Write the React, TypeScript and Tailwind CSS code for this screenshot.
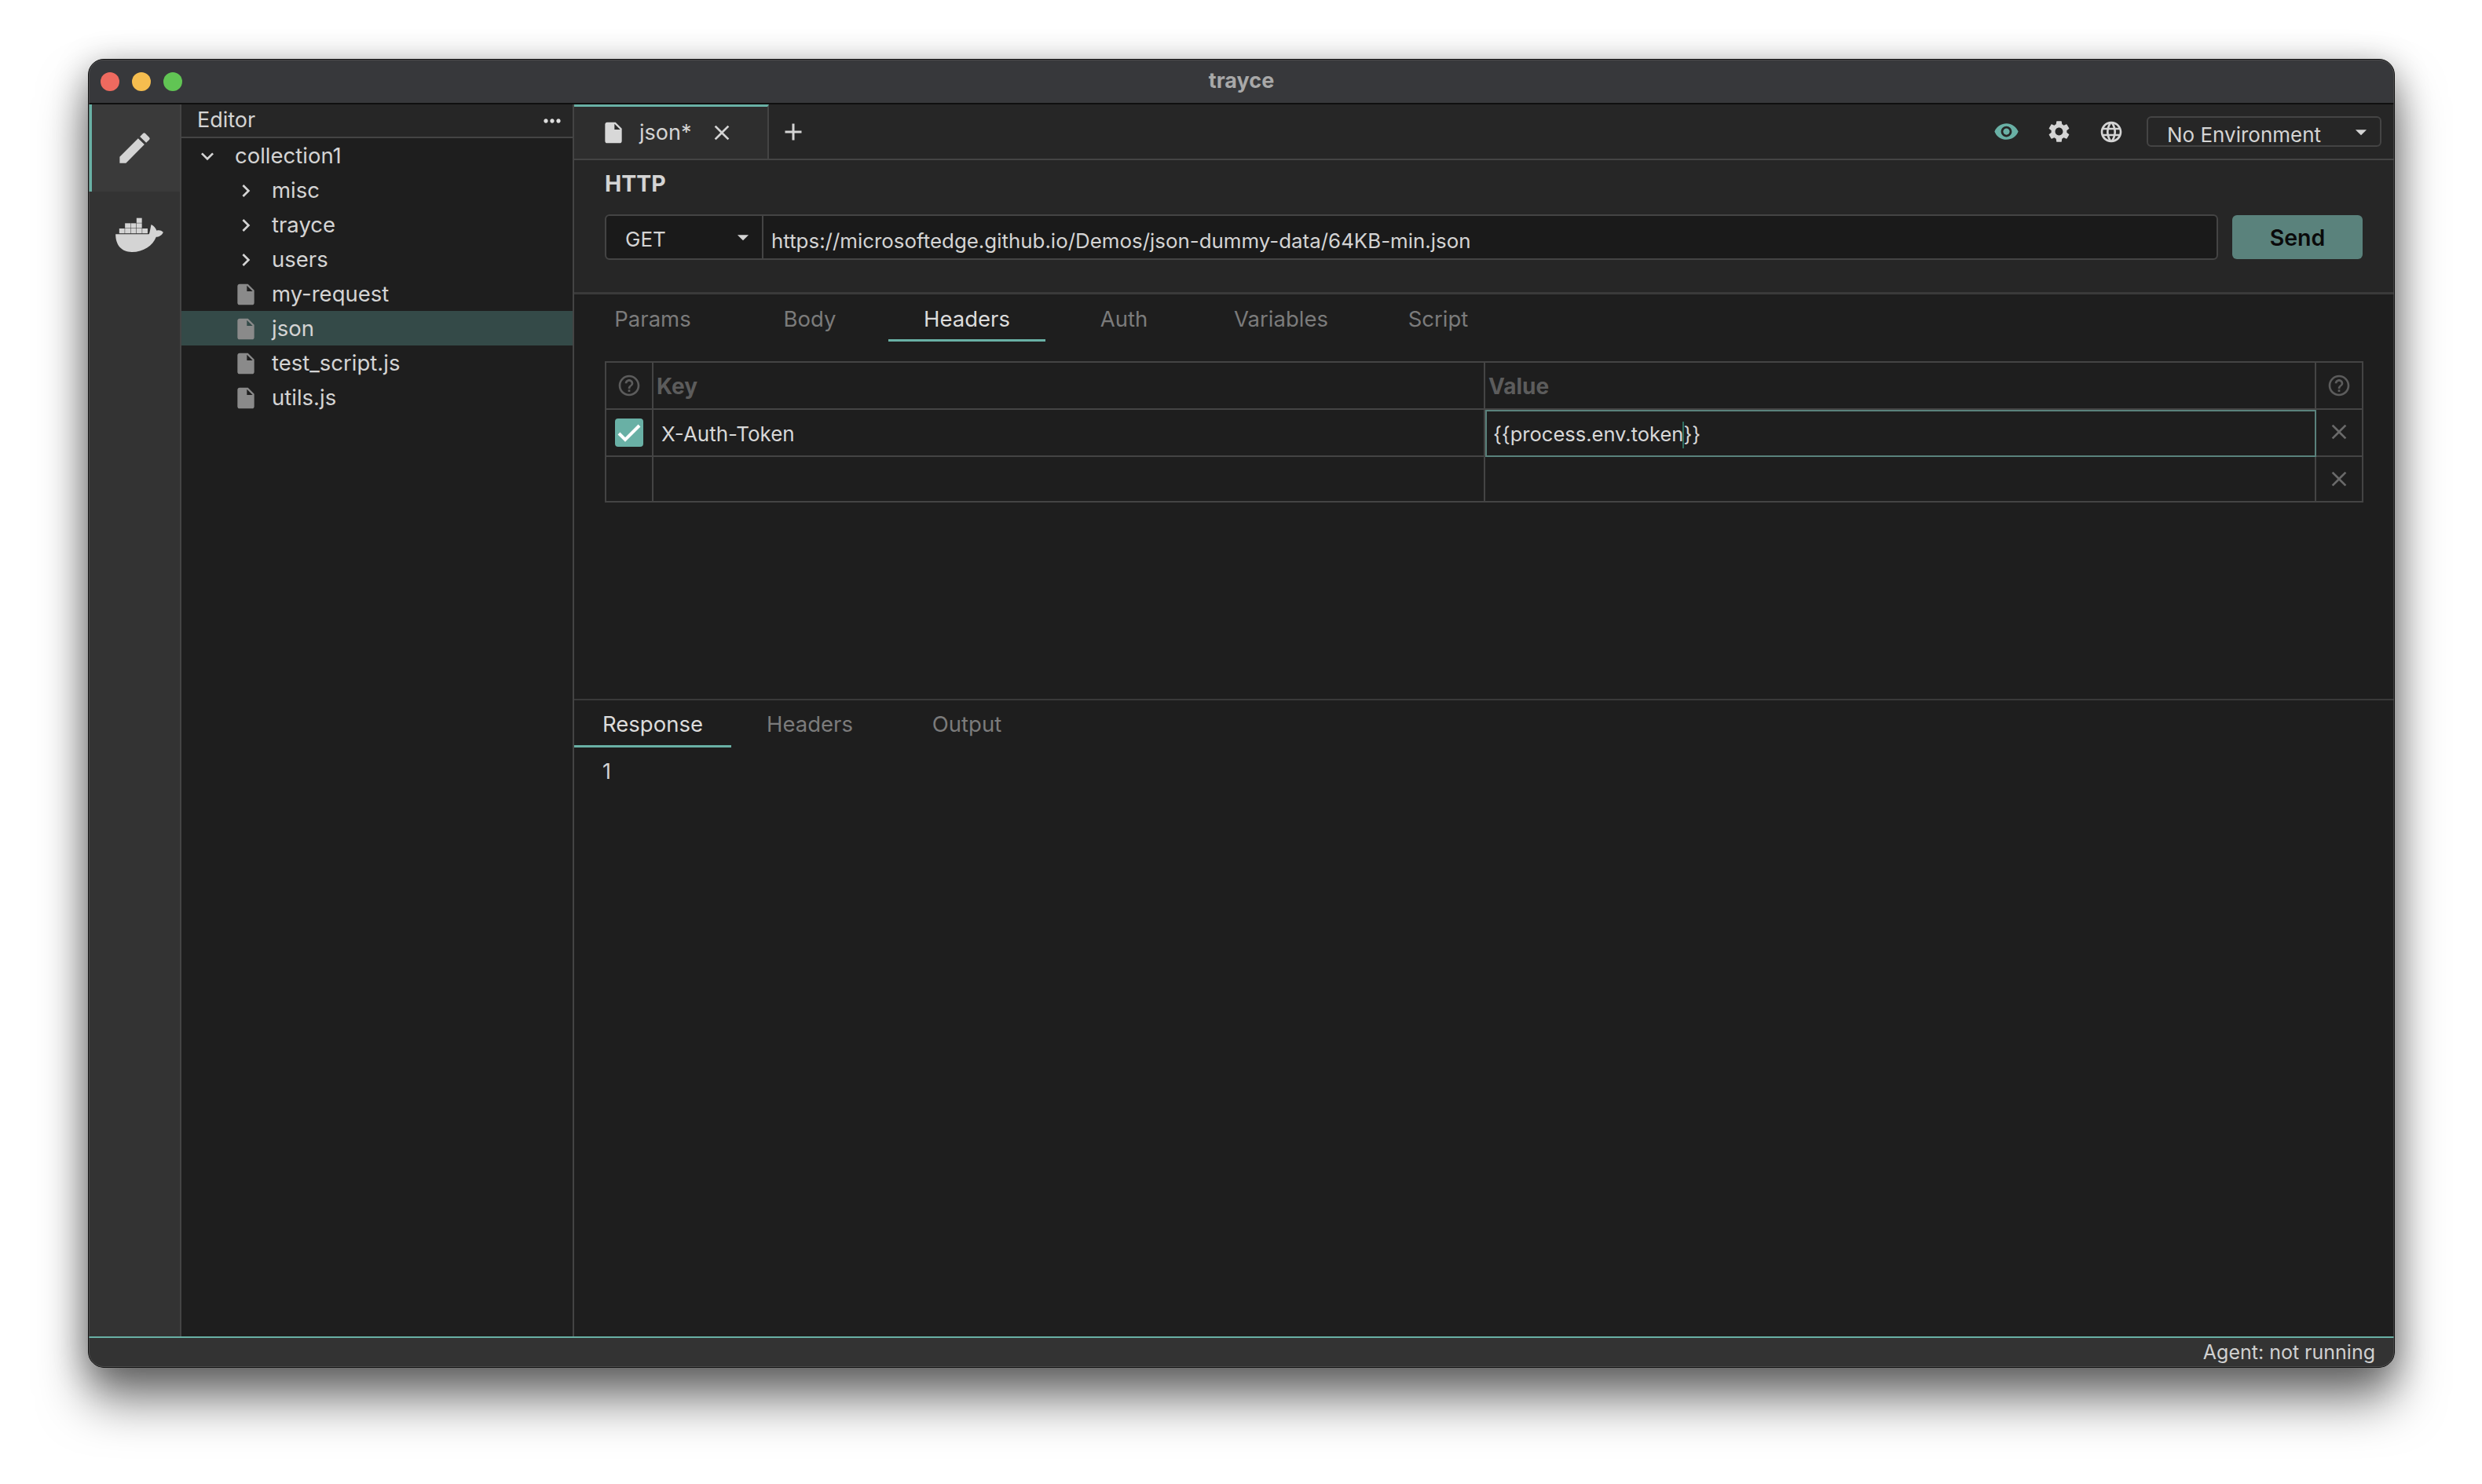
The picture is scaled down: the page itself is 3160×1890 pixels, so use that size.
import {
  MdAdd, MdArrowDropDown, MdClose, MdEdit, MdHelpOutline, MdInsertDriveFile,
  MdKeyboardArrowDown, MdKeyboardArrowRight, MdLanguage, MdMoreHoriz, MdSettings, MdVisibility,
} from 'react-icons/md'

const TREE = [
  { name: 'misc', kind: 'dir' },
  { name: 'trayce', kind: 'dir' },
  { name: 'users', kind: 'dir' },
  { name: 'my-request', kind: 'file' },
  { name: 'json', kind: 'file', selected: true },
  { name: 'test_script.js', kind: 'file' },
  { name: 'utils.js', kind: 'file' },
]

const REQUEST_TABS = ['Params', 'Body', 'Headers', 'Auth', 'Variables', 'Script']
const RESPONSE_TABS = ['Response', 'Headers', 'Output']

function DockerIcon() {
  const boxes = [
    [157, 662], [179, 662], [201, 662], [223, 662], [245, 662],
    [179, 642], [201, 642], [223, 642],
    [223, 622],
  ]
  return (
    <svg width="61" height="44" viewBox="143 620 182 132" fill="#d4d4d4">
      {boxes.map(([x, y]) => <rect key={`${x}-${y}`} x={x} y={y} width="20.5" height="18.5" />)}
      <path d="M143 684H270C274 680 275 664 279 647C288 651 296 660 300 670C308 667 318 669 325 676C320 688 308 694 298 694C285 727 250 752 205 752C165 752 143 725 143 684Z" />
    </svg>
  )
}

function TabStrip({ tabs, active, offset }: { tabs: string[]; active: string; offset: string }) {
  return (
    <div className="flex text-[27.5px]">
      {tabs.map(t => (
        <div key={t} className={`flex h-[60px] w-[200px] items-center justify-center border-b-[3px] ${offset} ${t === active ? 'border-[#69b0a5] text-[#dcdcdc]' : 'border-transparent text-[#7b7b7b]'}`}>
          {t}
        </div>
      ))}
    </div>
  )
}

function HeadersTable() {
  const cell = 'border-r-2 border-b-2 border-[#444444] flex items-center'
  return (
    <div className="mx-[39px] mt-[25px] grid grid-cols-[60px_1059px_1058px_1fr] grid-rows-[60px_60px_58px] border-t-2 border-l-2 border-[#444444]">
      <div className={`${cell} justify-center text-[#5c5c5c]`}><MdHelpOutline size={32} /></div>
      <div className={`${cell} pl-[4px] pt-[2px] text-[28px] font-bold text-[#5c5c5c]`}>Key</div>
      <div className={`${cell} pl-[4px] pt-[2px] text-[28px] font-bold text-[#5c5c5c]`}>Value</div>
      <div className={`${cell} justify-center text-[#5c5c5c]`}><MdHelpOutline size={32} /></div>

      <div className={`${cell} justify-center`}>
        <span className="flex h-[36px] w-[36px] items-center justify-center rounded-[4px] bg-[#69b0a5]">
          <svg width="36" height="36" viewBox="0 0 36 36" fill="none" stroke="#ffffff" strokeWidth="4">
            <path d="M5 19L13 27L31 9" />
          </svg>
        </span>
      </div>
      <div className={`${cell} pl-[10px] pt-[3px] text-[26px] text-[#d8d8d8]`}>X-Auth-Token</div>
      <div className="flex items-center border-2 border-[#5a827c] pl-[8px] pt-[3px] text-[25.5px] text-[#d8d8d8]">
        <span>{'{{process.env.token'}</span>
        <span className="-mx-[1px] h-[34px] w-[2px] bg-[#2f6f5f]" />
        <span>{'}}'}</span>
      </div>
      <div className={`${cell} justify-center pb-[3px] text-[#6a6a6a]`}><MdClose size={32} /></div>

      <div className={cell} />
      <div className={cell} />
      <div className={cell} />
      <div className={`${cell} justify-center text-[#6a6a6a]`}><MdClose size={32} /></div>
    </div>
  )
}

export default function App() {
  return (
    <div className="h-[1890px] w-[3160px] overflow-hidden bg-white pl-[112px] pt-[75px] font-['Inter','Liberation_Sans',sans-serif] text-[26px] text-[#d4d4d4]">
      <div className="relative flex h-[1667px] w-[2937px] flex-col rounded-[20px] shadow-[0_42px_62px_rgba(0,0,0,0.5),0_8px_44px_rgba(0,0,0,0.32)]">
        <div className="flex h-full flex-col overflow-hidden rounded-[20px] border border-[#111111] bg-[#1e1e1e]">
          {/* title bar */}
          <div className="relative flex h-[57px] shrink-0 items-center justify-center border-b-2 border-[#0f0f0f] bg-[#37383b] text-[27px] font-bold text-[#a8a8a8]">
            <div className="absolute left-[15px] top-[16px] flex gap-[16px]">
              <span className="h-[24px] w-[24px] rounded-full bg-[#ee6a5f]" />
              <span className="h-[24px] w-[24px] rounded-full bg-[#f5bd4f]" />
              <span className="h-[24px] w-[24px] rounded-full bg-[#61c554]" />
            </div>
            trayce
          </div>

          <div className="flex min-h-0 flex-1">
            {/* activity bar */}
            <div className="flex w-[118px] shrink-0 flex-col border-r-2 border-[#444444] bg-[#333333]">
              <div className="flex h-[111px] items-center justify-center border-l-4 border-[#69b0a5] bg-[#3a3a3a] pr-[4px] text-[#d4d4d4]">
                <MdEdit size={51} />
              </div>
              <div className="flex justify-center pl-[12px] pt-[33px]"><DockerIcon /></div>
            </div>

            {/* file tree */}
            <div className="flex w-[500px] shrink-0 flex-col border-r-2 border-[#444444] bg-[#1e1e1e] text-[27.5px]">
              <div className="flex h-[43px] shrink-0 items-center justify-between border-b-2 border-[#444444] bg-[#262626] pl-[20px] pr-[10px] text-[27px]">
                <span>Editor</span>
                <MdMoreHoriz size={32} className="text-[#dddddd]" />
              </div>
              <div className="flex h-[44px] items-center pl-[17px] pt-[1px]">
                <MdKeyboardArrowDown size={32} />
                <span className="ml-[19px]">collection1</span>
              </div>
              {TREE.map(item => (
                <div key={item.name} className={`flex h-[44px] items-center pl-[66px] pt-[1px] ${item.selected ? 'bg-[#344a48]' : ''}`}>
                  {item.kind === 'dir'
                    ? <MdKeyboardArrowRight size={32} />
                    : <MdInsertDriveFile size={32} className="text-[#8a8a8a]" />}
                  <span className="ml-[17px]">{item.name}</span>
                </div>
              ))}
            </div>

            {/* main */}
            <div className="flex min-w-0 flex-1 flex-col">
              <div className="flex h-[71px] shrink-0 items-stretch border-b-2 border-[#444444] bg-[#262626]">
                <div className="flex w-[248px] items-center border-r-2 border-t-[3px] border-r-[#444444] border-t-[#69b0a5] bg-[#2e2e2e] pl-[34px] text-[27px]">
                  <MdInsertDriveFile size={32} className="text-[#d8d8d8]" />
                  <span className="ml-[17px]">json*</span>
                  <MdClose size={32} className="ml-[23px]" />
                </div>
                <div className="flex items-center pl-[13px]"><MdAdd size={36} /></div>
                <div className="ml-auto flex items-center pr-[16px]">
                  <MdVisibility size={33} className="text-[#69b0a5]" />
                  <MdSettings size={33} className="ml-[34px]" />
                  <MdLanguage size={32} className="ml-[34px]" />
                  <div className="ml-[29px] flex h-[39px] w-[299px] items-center justify-between rounded-[6px] border-2 border-[#444444] pl-[24px] pr-[7px] pt-[8px]">
                    <span>No Environment</span>
                    <MdArrowDropDown size={34} className="-mt-[8px]" />
                  </div>
                </div>
              </div>

              <div className="h-[171px] shrink-0 border-b-[3px] border-[#3a3a3a] bg-[#262626] pl-[39px] pr-[40px] pt-[10px]">
                <div className="h-[40px] text-[28.5px] font-bold leading-[40px]">HTTP</div>
                <div className="mt-[19px] flex items-center gap-[18px]">
                  <div className="flex h-[58px] flex-1 items-center rounded-[6px] border-2 border-[#444444] bg-[#1a1a1a]">
                    <div className="flex h-full w-[200px] items-center justify-between border-r-2 border-[#444444] pl-[24px] pr-[7px] pt-[4px]">
                      GET
                      <MdArrowDropDown size={34} className="-mt-[4px]" />
                    </div>
                    <span className="pl-[10px] pt-[10px] text-[25.9px]">https://microsoftedge.github.io/Demos/json-dummy-data/64KB-min.json</span>
                  </div>
                  <button className="h-[56px] w-[166px] rounded-[6px] bg-[#5a827c] pt-[2px] text-[28.5px] font-semibold text-[#0a0a0a]">Send</button>
                </div>
              </div>

              <div className="h-[517px] shrink-0 border-b-2 border-[#3a3a3a]">
                <TabStrip tabs={REQUEST_TABS} active="Headers" offset="pt-[6px]" />
                <HeadersTable />
              </div>

              <div className="flex-1">
                <TabStrip tabs={RESPONSE_TABS} active="Response" offset="pt-[4px]" />
                <div className="pl-[36px] pt-[11px] text-[27px]">1</div>
              </div>
            </div>
          </div>

          {/* status bar */}
          <div className="flex h-[39px] shrink-0 items-center justify-end border-t-2 border-[#69b0a5] bg-[#333333] pr-[24px] text-[25px] text-[#d0d0d0]">
            Agent: not running
          </div>
        </div>
        <div className="pointer-events-none absolute inset-[1px] rounded-[19px] border border-[#5a5a5a]/60" />
      </div>
    </div>
  )
}
